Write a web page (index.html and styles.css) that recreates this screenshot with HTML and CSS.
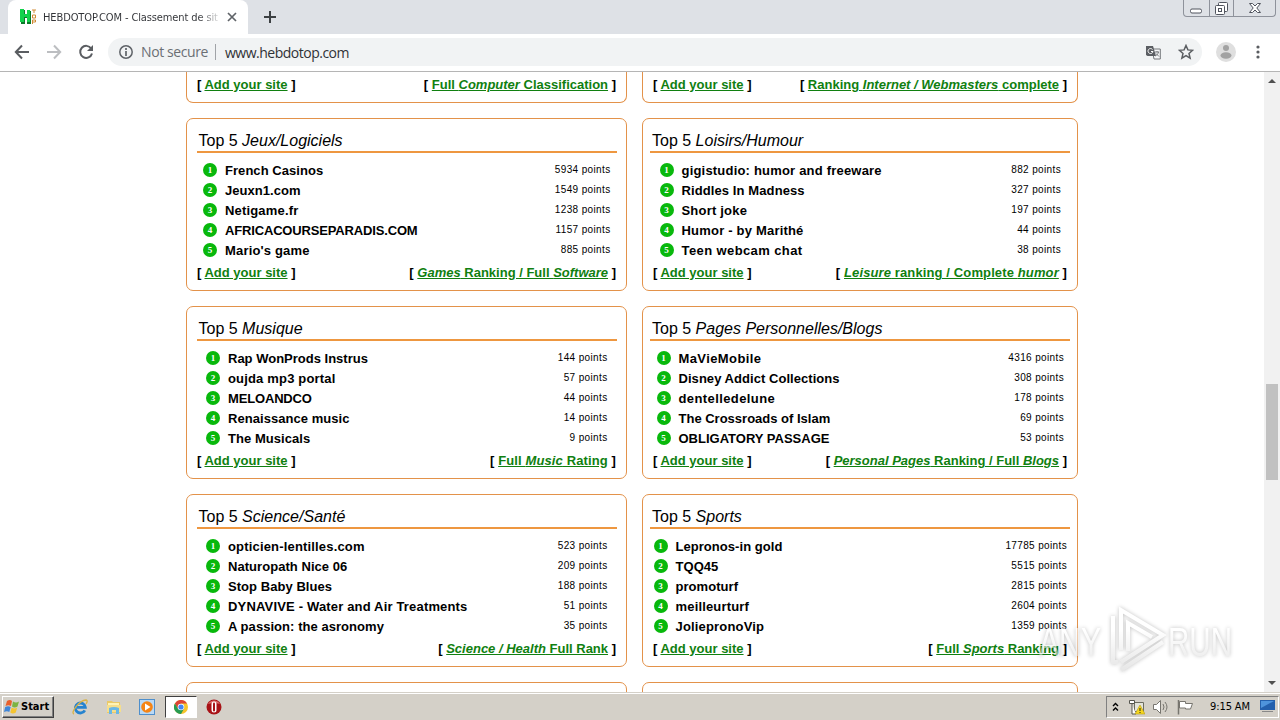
FILE: index.html
```html
<!DOCTYPE html>
<html lang="en">
<head>
    <meta charset="UTF-8">
    <meta name="viewport" content="width=device-width, initial-scale=1.0">
    <title>HEBDOTOP.COM - Classement de sites</title>
    <link rel="stylesheet" href="styles.css">
</head>
<body>
    <div class="tab-strip">
        <div class="tab">
            <svg class="favicon" width="16" height="16" viewBox="0 0 16 16">
                <path d="M1 1h4v5h2V2h4v13H7V9H5v6H1z" fill="#0b7a2a"/>
                <path d="M0 0h4v5h3V1h3v12H7V8H4v5H0z" fill="#12d24c"/>
                <path d="M12 1h4M14 1v3M12.5 6h3v3h-3zM12.5 15v-4h3v2h-3" fill="none" stroke="#d08a35"/>
            </svg>
            <span class="tab-title">HEBDOTOP.COM - Classement de sit</span>
            <svg width="10" height="10" viewBox="0 0 10 10"><path d="M1 1l8 8M9 1l-8 8" stroke="#5f6368" stroke-width="1.7"/></svg>
        </div>
        <svg class="new-tab" width="14" height="14" viewBox="0 0 14 14"><path d="M7 1v12M1 7h12" stroke="#3c4043" stroke-width="2"/></svg>
        <div class="window-buttons">
            <span class="minimize"><svg width="13" height="6" viewBox="0 0 13 6"><rect x=".5" y="1" width="11" height="4" rx="1.5" fill="#fff" stroke="#50545e"/></svg></span>
            <span class="restore"><svg width="13" height="13" viewBox="0 0 13 13"><rect x="3.5" y=".5" width="9" height="9" rx="1" fill="#fff" stroke="#50545e"/><rect x=".5" y="3.5" width="9" height="9" rx="1" fill="#fff" stroke="#50545e"/><rect x="3.5" y="6.5" width="3" height="3" fill="none" stroke="#50545e"/></svg></span>
            <span class="close"><svg width="12" height="10" viewBox="0 0 12 10"><path d="M.5.5h3L6 3 8.500.5h3L7.800 5l3.700 4.500h-3L6 7 3.500 9.500h-3L4.200 5z" fill="#fff" stroke="#50545e"/></svg></span>
        </div>
    </div>

    <div class="toolbar">
        <svg width="16" height="16" viewBox="0 0 16 16"><path d="M15 8H2M8 1.500L1.800 8 8 14.500" fill="none" stroke="#5a5d61" stroke-width="2"/></svg>
        <svg width="16" height="16" viewBox="0 0 16 16"><path d="M1 8h13M8 1.500L14.200 8 8 14.500" fill="none" stroke="#bcbec1" stroke-width="2"/></svg>
        <svg width="16" height="16" viewBox="0 0 16 16"><path d="M13.200 4.500A6 6 0 1 0 14 9.500" fill="none" stroke="#5a5d61" stroke-width="2"/><path d="M15 1v6H9z" fill="#5a5d61"/></svg>
        <div class="address">
            <svg width="14" height="14" viewBox="0 0 14 14"><circle cx="7" cy="7" r="6.200" fill="none" stroke="#5f6368" stroke-width="1.500"/><path d="M7 3v2M7 6v5" stroke="#5f6368" stroke-width="1.700"/></svg>
            <span class="security">Not secure</span>
            <span class="url">www.hebdotop.com</span>
            <svg class="translate" width="15" height="15" viewBox="0 0 15 15"><path d="M6 4h8.300v10H8z" fill="#f5f6f8" stroke="#74777b"/><path d="M0 1h7l3 10H1.500L0 10z" fill="#5b5e63"/><path d="M6.500 4.500A2.500 2.500 0 1 0 7 6.500H5" fill="none" stroke="#fff"/><path d="M9 7h4M11 6v1M12.500 7c-.5 2-1.500 3-3 4M10 8.500l3 3" fill="none" stroke="#74777b"/></svg>
            <svg width="16" height="16" viewBox="0 0 16 16"><path d="M8 1.500l1.900 4.400 4.700.4-3.600 3.100 1.100 4.700L8 11.600l-4.100 2.500L5 9.400 1.400 6.300l4.700-.4z" fill="none" stroke="#5a5d61" stroke-width="1.500"/></svg>
        </div>
        <svg class="avatar" width="20" height="20" viewBox="0 0 20 20"><circle cx="10" cy="10" r="10" fill="#dfdfdf"/><circle cx="10" cy="6" r="3" fill="#a2a2a2"/><ellipse cx="10" cy="13.500" rx="5.500" ry="3.200" fill="#a2a2a2"/></svg>
        <svg class="dots" width="4" height="14" viewBox="0 0 4 14" fill="#5a5d61"><circle cx="2" cy="2" r="1.600"/><circle cx="2" cy="7" r="1.600"/><circle cx="2" cy="12" r="1.600"/></svg>
    </div>

    <div class="viewport">
        <main class="rankings">
            <section class="card card-first">
                <p class="card-links"><span>[ <a href="#">Add your site</a> ]</span><span>[ <a href="#">Full <i>Computer</i> Classification</a> ]</span></p>
            </section>
            <section class="card card-first">
                <p class="card-links"><span>[ <a href="#">Add your site</a> ]</span><span>[ <a href="#">Ranking <i>Internet / Webmasters</i> complete</a> ]</span></p>
            </section>

            <section class="card">
                <h2>Top 5 <i>Jeux/Logiciels</i></h2>
                <ol class="top wide">
                    <li><b>French Casinos</b><span>5934 points</span></li>
                    <li><b>Jeuxn1.com</b><span>1549 points</span></li>
                    <li><b class="spaced">Netigame.fr</b><span>1238 points</span></li>
                    <li><b class="caps">AFRICACOURSEPARADIS.COM</b><span>1157 points</span></li>
                    <li><b class="spaced">Mario's game</b><span>885 points</span></li>
                </ol>
                <p class="card-links"><span>[ <a href="#">Add your site</a> ]</span><span>[ <a href="#"><i>Games</i> Ranking / Full <i>Software</i></a> ]</span></p>
            </section>
            <section class="card">
                <h2>Top 5 <i>Loisirs/Humour</i></h2>
                <ol class="top loose">
                    <li><b>gigistudio: humor and freeware</b><span>882 points</span></li>
                    <li><b class="tight">Riddles In Madness</b><span>327 points</span></li>
                    <li><b>Short joke</b><span>197 points</span></li>
                    <li><b>Humor - by Marithé</b><span>44 points</span></li>
                    <li><b class="spaced">Teen webcam chat</b><span>38 points</span></li>
                </ol>
                <p class="card-links"><span>[ <a href="#">Add your site</a> ]</span><span class="loose">[ <a href="#"><i>Leisure</i> ranking / Complete <i>humor</i></a> ]</span></p>
            </section>

            <section class="card">
                <h2>Top 5 <i>Musique</i></h2>
                <ol class="top">
                    <li><b class="tight">Rap WonProds Instrus</b><span>144 points</span></li>
                    <li><b class="spaced">oujda mp3 portal</b><span>57 points</span></li>
                    <li><b class="caps">MELOANDCO</b><span>44 points</span></li>
                    <li><b>Renaissance music</b><span>14 points</span></li>
                    <li><b>The Musicals</b><span>9 points</span></li>
                </ol>
                <p class="card-links"><span>[ <a href="#">Add your site</a> ]</span><span class="loose">[ <a href="#">Full <i>Music</i> Rating</a> ]</span></p>
            </section>
            <section class="card">
                <h2>Top 5 <i>Pages Personnelles/Blogs</i></h2>
                <ol class="top wide">
                    <li><b class="loose">MaVieMobile</b><span>4316 points</span></li>
                    <li><b>Disney Addict Collections</b><span>308 points</span></li>
                    <li><b class="loose">dentelledelune</b><span>178 points</span></li>
                    <li><b class="tight">The Crossroads of Islam</b><span>69 points</span></li>
                    <li><b class="tight">OBLIGATORY PASSAGE</b><span>53 points</span></li>
                </ol>
                <p class="card-links"><span>[ <a href="#">Add your site</a> ]</span><span>[ <a href="#"><i>Personal Pages</i> Ranking / Full <i>Blogs</i></a> ]</span></p>
            </section>

            <section class="card">
                <h2>Top 5 <i>Science/Santé</i></h2>
                <ol class="top">
                    <li><b class="spaced">opticien-lentilles.com</b><span>523 points</span></li>
                    <li><b>Naturopath Nice 06</b><span>209 points</span></li>
                    <li><b>Stop Baby Blues</b><span>188 points</span></li>
                    <li><b class="spaced">DYNAVIVE - Water and Air Treatments</b><span>51 points</span></li>
                    <li><b>A passion: the asronomy</b><span>35 points</span></li>
                </ol>
                <p class="card-links"><span>[ <a href="#">Add your site</a> ]</span><span>[ <a href="#"><i>Science / Health</i> Full Rank</a> ]</span></p>
            </section>
            <section class="card">
                <h2>Top 5 <i>Sports</i></h2>
                <ol class="top widest">
                    <li><b>Lepronos-in gold</b><span>17785 points</span></li>
                    <li><b>TQQ45</b><span>5515 points</span></li>
                    <li><b>promoturf</b><span>2815 points</span></li>
                    <li><b class="spaced">meilleurturf</b><span>2604 points</span></li>
                    <li><b class="spaced">JoliepronoVip</b><span>1359 points</span></li>
                </ol>
                <p class="card-links"><span>[ <a href="#">Add your site</a> ]</span><span>[ <a href="#">Full <i>Sports</i> Ranking</a> ]</span></p>
            </section>

            <section class="card"></section>
            <section class="card"></section>
        </main>

        <div class="scrollbar">
            <svg width="8" height="4" viewBox="0 0 8 4"><path d="M0 4l4-4 4 4z" fill="#505050"/></svg>
            <div class="thumb"></div>
            <svg class="down" width="8" height="4" viewBox="0 0 8 4"><path d="M0 0l4 4 4-4z" fill="#505050"/></svg>
        </div>
    </div>

    <div class="taskbar">
        <div class="start">
            <svg width="16" height="16" viewBox="0 0 16 16"><path d="M3 2q3-2 5 0L7 7Q4.500 5.500 1.500 7z" fill="#e8602c"/><path d="M9 2.500q3 2 6 0L13.500 7.500q-3 2-5.500 0z" fill="#7cb342"/><path d="M1.200 8q3-1.500 5.500 0L5.300 13Q3 11.500 0 13z" fill="#3f86d8"/><path d="M7.700 8.500q3 2 5.500 0L11.800 13.500q-3 2-5.500 0z" fill="#f4c430"/></svg>
            <span>Start</span>
        </div>
        <div class="launch">
            <svg width="16" height="16" viewBox="0 0 16 16"><path d="M12.800 11.300A5 5 0 1 1 13.300 8.300H5" fill="none" stroke="#2583cf" stroke-width="2.800"/><path d="M2 15C-2 14 7 1.500 14 1c2 .3 1 2.500 0 4" fill="none" stroke="#d9b245" stroke-width="1.300"/></svg>
        </div>
        <div class="launch">
            <svg width="16" height="16" viewBox="0 0 16 16"><path d="M1 2h5l1 1h7v11H1z" fill="#eac968"/><path d="M2 4h11v3H2z" fill="#fff3b5"/><path d="M1 6h14v7H1z" fill="#f5de8c"/><path d="M3 15V9q5-2 10 0v6h-3v-4H6v4z" fill="#69b7e6"/></svg>
        </div>
        <div class="launch">
            <svg width="16" height="16" viewBox="0 0 16 16"><rect x=".5" y=".5" width="15" height="15" fill="#b9d9f5" stroke="#4e8fcc"/><circle cx="8" cy="8" r="5.800" fill="#f58414"/><path d="M6 4.500L11.500 8 6 11.500z" fill="#fff"/></svg>
        </div>
        <div class="launch active">
            <svg width="14" height="14" viewBox="0 0 14 14"><circle cx="7" cy="7" r="7" fill="#f6c42b"/><path d="M.9 3.500A7 7 0 0 1 13.100 3.500H7L4 8.700z" fill="#dd4435"/><path d="M.9 3.500A7 7 0 0 0 7 14l3-5.300H4z" fill="#279b52"/><circle cx="7" cy="7" r="3.300" fill="#fff"/><circle cx="7" cy="7" r="2.600" fill="#4285f4"/></svg>
        </div>
        <div class="launch">
            <svg width="16" height="16" viewBox="0 0 16 16"><circle cx="8" cy="8" r="7.500" fill="#a81216"/><path d="M2 5a7 7 0 0 1 12 0q-6-2-12 0z" fill="#dc6a68"/><rect x="5.500" y="2.500" width="5" height="11" rx="2.500" fill="#fff"/><rect x="7" y="3.500" width="2" height="9" rx="1" fill="#a81216"/></svg>
        </div>
        <div class="tray">
            <svg width="7" height="10" viewBox="0 0 7 10"><path d="M1 4l2.500-2.500L6 4M1 8.500L3.500 6 6 8.500" fill="none" stroke="#000" stroke-width="1.400"/></svg>
            <svg class="network" width="16" height="16" viewBox="0 0 16 16"><path d="M5.500 3.500h9v9h-9z" fill="#e4e4da" stroke="#6c6c60"/><path d="M.5 1.500h5v3h-5zM3 5v10h4" fill="#fff" stroke="#55554e"/><path d="M11 6l5 9H6z" fill="#f6d61d" stroke="#b49a1c" stroke-width=".6"/><path d="M11 9v3M11 13v1" stroke="#222"/></svg>
            <svg class="volume" width="16" height="16" viewBox="0 0 16 16"><path d="M.5 5.500h3l4-4v13l-4-4h-3z" fill="#fff" stroke="#77756f"/><path d="M10 5q2 3 0 6M12 3q4 5 0 10" fill="none" stroke="#77756f"/></svg>
            <svg class="flag" width="17" height="16" viewBox="0 0 17 16"><path d="M1.500 1v14.500" stroke="#77756f" stroke-width="1.500"/><path d="M2.500 2.500h6v2h7l-2 5.500h-5V9h-6z" fill="#fff" stroke="#77756f"/></svg>
            <span class="clock">9:15 AM</span>
            <svg width="15" height="13" viewBox="0 0 15 13"><path d="M0 0h15v10H0z" fill="#2460ad"/><path d="M1 1h13L1 8z" fill="#4f94dc"/><path d="M2 11h11v1H2z" fill="#888"/></svg>
        </div>
    </div>

    <svg class="watermark" width="216" height="72" viewBox="0 0 216 72">
        <defs>
            <linearGradient id="fade" gradientUnits="userSpaceOnUse" x1="0" y1="10" x2="0" y2="66">
                <stop offset="0.3" stop-color="#fff"/>
                <stop offset="1" stop-color="#d4d4d4"/>
            </linearGradient>
        </defs>
        <text x="5" y="52" textLength="62" lengthAdjust="spacingAndGlyphs">ANY</text>
        <text x="134" y="52" textLength="64" lengthAdjust="spacingAndGlyphs">RUN</text>
        <path d="M79 12v46h5M87 46V6l42 25-42 27M94 47v-28l24 14M87 66l42-28"/>
    </svg>
</body>
</html>
```
FILE: styles.css
```css
* {
    box-sizing: border-box;
    margin: 0;
    padding: 0;
}

body {
    width: 1280px;
    height: 720px;
    overflow: hidden;
    display: flex;
    flex-direction: column;
    font-family: "Liberation Sans", Arial, sans-serif;
    font-size: 13px;
    color: #000;
    background-color: #fff;
}

svg {
    display: block;
    flex-shrink: 0;
}

/* browser frame */
.tab-strip {
    height: 34px;
    display: flex;
    align-items: flex-start;
    padding-left: 8px;
    background-color: #dee1e6;
}

.tab {
    width: 240px;
    height: 34px;
    display: flex;
    align-items: center;
    padding: 0 11px 0 12px;
    background-color: #fff;
    border-radius: 8px 8px 0 0;
}

.tab-title {
    width: 176px;
    margin: 0 8px 0 7px;
    overflow: hidden;
    white-space: nowrap;
    font: 11px "DejaVu Sans Condensed", sans-serif;
    letter-spacing: -0.12px;
    background: linear-gradient(to right, #303236 155px, #fff 180px);
    background-clip: text;
    color: transparent;
}

.new-tab {
    margin: 10px 0 0 15px;
}

.window-buttons {
    display: flex;
    height: 17px;
    margin: 0 4px 0 auto;
    border: 1px solid #8e929b;
    border-top: none;
    border-radius: 0 0 4px 4px;
}

.window-buttons span {
    display: flex;
    align-items: center;
    justify-content: center;
    width: 25px;
}

.window-buttons .restore {
    border-left: 1px solid #8e929b;
    border-right: 1px solid #8e929b;
}

.window-buttons .minimize {
    padding-top: 5px;
}

.window-buttons .close {
    width: 41px;
}

.toolbar {
    height: 38px;
    display: flex;
    align-items: center;
    gap: 16px;
    padding: 0 20px 1px 14px;
    border-bottom: 1px solid #b5b5b5;
}

.address {
    width: 1095px;
    height: 28px;
    margin-left: -2px;
    display: flex;
    align-items: center;
    padding: 0 8px 0 11px;
    border-radius: 14px;
    background-color: #f1f3f4;
    font: 14px "Open Sans", sans-serif;
}

.security {
    margin-left: 8px;
    padding-right: 7px;
    border-right: 1px solid #a0a3a7;
    line-height: 16px;
    letter-spacing: -0.4px;
    color: #6b6f74;
}

.url {
    margin-left: 9px;
    letter-spacing: -0.5px;
    color: #303236;
}

.translate {
    margin: 0 17px 0 auto;
}

.avatar {
    margin-left: -2px;
}

.dots {
    margin-left: 4px;
}

/* page */
.viewport {
    height: 620px;
    display: flex;
    overflow: hidden;
}

.rankings {
    height: 620px;
    display: grid;
    grid-template-columns: 441px 436px;
    grid-template-rows: 31px repeat(4, 173px);
    gap: 15px;
    margin-left: 186px;
}

.card {
    display: flex;
    flex-direction: column;
    align-items: center;
    padding-top: 12px;
    border: 1px solid #e3924a;
    border-radius: 7px;
}

.card-first {
    padding-top: 0;
    border-top: none;
    border-radius: 0 0 7px 7px;
}

.card h2 {
    width: 420px;
    height: 22px;
    padding-left: 2px;
    border-bottom: 2px solid #ee9740;
    font-size: 16px;
    font-weight: normal;
    line-height: 20px;
}

.top {
    width: 401px;
    margin-top: 7px;
    list-style: none;
    counter-reset: place;
}

.top.wide {
    width: 407px;
}

.top.widest {
    width: 413px;
}

.top li {
    height: 20px;
    display: flex;
    align-items: center;
    counter-increment: place;
}

.top li::before {
    content: counter(place);
    width: 14px;
    height: 14px;
    margin-right: 8px;
    border-radius: 50%;
    background-color: #08b80c;
    color: #fff;
    font: bold 9px/14px "Liberation Serif", serif;
    text-align: center;
}

.top b {
    letter-spacing: 0.05px;
}

.top.loose b {
    letter-spacing: 0.2px;
}

.top b.spaced {
    letter-spacing: 0.17px;
}

.top.loose b.spaced,
.top b.loose {
    letter-spacing: 0.4px;
}

.top b.tight {
    letter-spacing: 0;
}

.top.loose b.tight {
    letter-spacing: 0.1px;
}

.top b.caps {
    letter-spacing: -0.16px;
}

.top span {
    margin: 0 -0.5px 2px auto;
    font-size: 10px;
    letter-spacing: 0.36px;
}

.card-links {
    align-self: stretch;
    display: flex;
    justify-content: space-between;
    padding: 5px 10px 0;
    font-weight: bold;
    line-height: 15px;
}

.card-links .loose {
    letter-spacing: 0.12px;
}

.card-links a {
    color: #108010;
}

.scrollbar {
    width: 16px;
    height: 620px;
    margin-left: auto;
    display: flex;
    flex-direction: column;
    align-items: center;
    padding: 7px 0;
    background-color: #f1f1f1;
}

.thumb {
    width: 12px;
    height: 96px;
    margin-top: 301px;
    background-color: #c1c1c1;
}

.scrollbar .down {
    margin-top: auto;
}

/* taskbar */
.taskbar {
    height: 28px;
    display: flex;
    align-items: center;
    padding: 0 1px 0 2px;
    border-top: 1px solid #d4d0c8;
    box-shadow: inset 0 1px #fff;
    background-color: #d4d0c8;
}

.start {
    width: 52px;
    height: 22px;
    margin-right: 10px;
    display: flex;
    align-items: center;
    gap: 1px;
    padding-left: 1px;
    border: 1px solid;
    border-color: #fff #404040 #404040 #fff;
    box-shadow: inset -1px -1px #808080;
    font: bold 11px "DejaVu Sans Condensed", sans-serif;
}

.launch {
    width: 32px;
    height: 22px;
    margin-right: 1.5px;
    display: flex;
    align-items: center;
    justify-content: center;
}

.launch.active {
    background-color: #fff;
    border: 1px solid;
    border-color: #404040 #fff #fff #404040;
}

.tray {
    width: 173px;
    height: 22px;
    margin-left: auto;
    display: flex;
    align-items: center;
    padding: 0 3px 0 5px;
    border: 1px solid;
    border-color: #808080 #fff #fff #808080;
}

.network {
    margin-left: 10px;
}

.volume {
    margin-left: 8px;
}

.flag {
    margin-left: 8px;
}

.clock {
    margin: 0 auto 0 16px;
    white-space: nowrap;
    font: 11px "DejaVu Sans Condensed", sans-serif;
    letter-spacing: -0.1px;
}

/* recording overlay */
.watermark {
    position: absolute;
    left: 1034px;
    top: 604px;
    filter: drop-shadow(0 0 2px rgba(0, 0, 0, 0.45));
    opacity: 0.55;
}

.watermark text {
    fill: url(#fade);
    font: 40px "Liberation Sans", Arial, sans-serif;
}

.watermark path {
    fill: none;
    stroke: url(#fade);
    stroke-width: 4;
}
```
